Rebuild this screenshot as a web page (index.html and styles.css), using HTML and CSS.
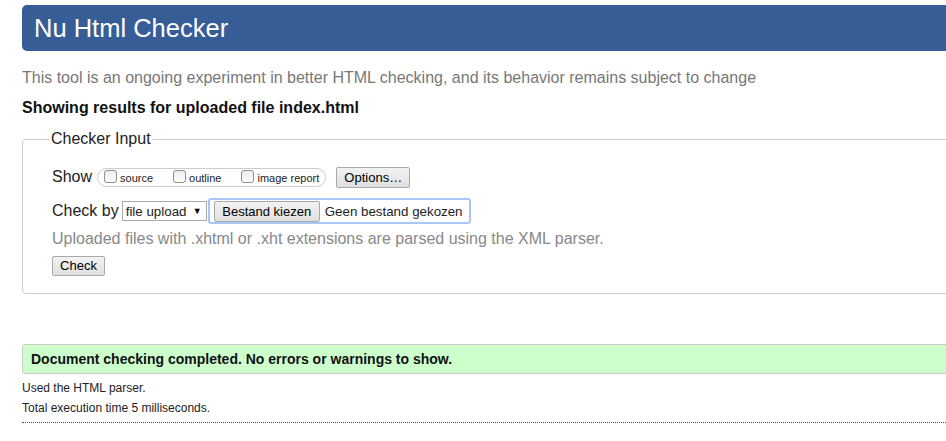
FILE: index.html
```html
<!DOCTYPE html>
<html lang="en">
<head>
<meta charset="utf-8">
<title>Nu Html Checker</title>
<link rel="stylesheet" href="styles.css">
</head>
<body>
<div class="page">
  <h1 class="title">Nu Html Checker</h1>
  <p class="desc">This tool is an ongoing experiment in better HTML checking, and its behavior remains subject to change</p>
  <p class="showing">Showing results for uploaded file index.html</p>
  <fieldset class="input">
    <legend class="legend">Checker Input</legend>
    <div class="row row-show">
      <span class="lbl">Show</span>
      <div class="pill">
        <label class="opt"><input type="checkbox" class="cb">source</label>
        <label class="opt"><input type="checkbox" class="cb">outline</label>
        <label class="opt"><input type="checkbox" class="cb">image report</label>
      </div>
      <button class="btn btn-options" type="button">Options…</button>
    </div>
    <div class="row row-check">
      <span class="lbl lbl-check">Check by</span>
      <div class="select"><span class="select-text">file upload</span><span class="select-arrow">▼</span></div>
      <div class="file">
        <button class="btn btn-file" type="button">Bestand kiezen</button>
        <span class="file-name">Geen bestand gekozen</span>
      </div>
    </div>
    <p class="hint">Uploaded files with .xhtml or .xht extensions are parsed using the XML parser.</p>
    <button class="btn btn-check" type="button">Check</button>
  </fieldset>
  <div class="success">Document checking completed. No errors or warnings to show.</div>
  <div class="details">
    <p class="meta">Used the HTML parser.</p>
    <p class="meta">Total execution time 5 milliseconds.</p>
  </div>
  <hr class="sep">
</div>
</body>
</html>
```
FILE: styles.css
```css
html {
  overflow: hidden;
  background: #fff;
}
body {
  margin: 0;
  padding: 5px 0 0 22px;
  font-family: "Liberation Sans", Arial, sans-serif;
  color: #222;
}
.page {
  width: 1000px;
}
.title {
  margin: 0;
  height: 46px;
  line-height: 46px;
  padding-left: 12px;
  background: #365d95;
  color: #fff;
  font-size: 25.5px;
  font-weight: normal;
  border-radius: 5px;
}
.desc {
  margin: 17px 0 0;
  font-size: 16px;
  line-height: 20px;
  color: #777;
}
.showing {
  margin: 10px 0 0;
  font-size: 16px;
  line-height: 20px;
  font-weight: bold;
  color: #111;
}
.input {
  margin: 11px 0 0;
  padding: 15px 0 17px 29px;
  border: 1px solid #ccc;
  border-radius: 4px;
  min-width: 0;
}
.legend {
  padding: 0 1px;
  margin-left: -2px;
  font-size: 16px;
  line-height: 20px;
  color: #222;
}
.row {
  display: flex;
  align-items: center;
  height: 26px;
}
.lbl {
  font-size: 16px;
  line-height: 20px;
  margin-right: 5px;
}
.lbl-check {
  margin-right: 3px;
}
.pill {
  display: flex;
  align-items: center;
  height: 17px;
  padding: 0 6px 0 6px;
  border: 1px solid #ccc;
  border-radius: 10px;
  gap: 20px;
}
.opt {
  display: flex;
  align-items: center;
  font-size: 11px;
  line-height: 13px;
  padding-top: 2px;
}
.cb {
  appearance: none;
  -webkit-appearance: none;
  width: 13px;
  height: 13px;
  margin: -4px 3px 0 0;
  border: 1px solid #8f8f8f;
  border-radius: 3px;
  background: linear-gradient(#ededed, #fdfdfd);
  box-sizing: border-box;
}
.btn {
  font-family: "Liberation Sans", Arial, sans-serif;
  font-size: 13px;
  color: #000;
  background: linear-gradient(#f2f2f2, #e0e0e0);
  border: 1px solid #a9a9a9;
  border-radius: 2px;
  height: 21px;
  padding: 0 7px;
  line-height: 19px;
}
.btn-options {
  margin-left: 10px;
  width: 74px;
  padding: 0;
}
.row-check {
  margin-top: 8px;
}
.select {
  display: flex;
  align-items: center;
  justify-content: space-between;
  box-sizing: border-box;
  width: 85px;
  height: 20px;
  padding: 0 4px 0 3px;
  border: 1px solid #a9a9a9;
  background: #fff;
  font-size: 13.333px;
}
.select-arrow {
  font-size: 9px;
  color: #000;
}
.file {
  display: flex;
  align-items: center;
  box-sizing: border-box;
  height: 26px;
  margin-left: 1px;
  padding: 1px 6px 0 4px;
  border: 2px solid #a8c7f7;
  border-radius: 3px;
}
.btn-file {
  width: 106px;
  padding: 0;
}
.file-name {
  margin-left: 5px;
  font-size: 13.333px;
}
.hint {
  margin: 5px 0 0;
  font-size: 16px;
  line-height: 20px;
  color: #888;
}
.btn-check {
  display: block;
  margin-top: 7px;
  width: 53px;
  height: 20px;
  line-height: 18px;
  padding: 0;
}
.success {
  margin-top: 50px;
  height: 28px;
  line-height: 28px;
  padding-left: 8px;
  background: #ccffcc;
  border: 1px solid #ccc;
  border-radius: 3px;
  font-size: 14px;
  font-weight: bold;
  color: #111;
}
.details {
  margin-top: 4px;
}
.meta {
  margin: 0;
  font-size: 12px;
  line-height: 20px;
  color: #222;
}
.sep {
  margin: 4px 0 0;
  border: 0;
  border-top: 1px dotted #555;
  height: 0;
}
```
